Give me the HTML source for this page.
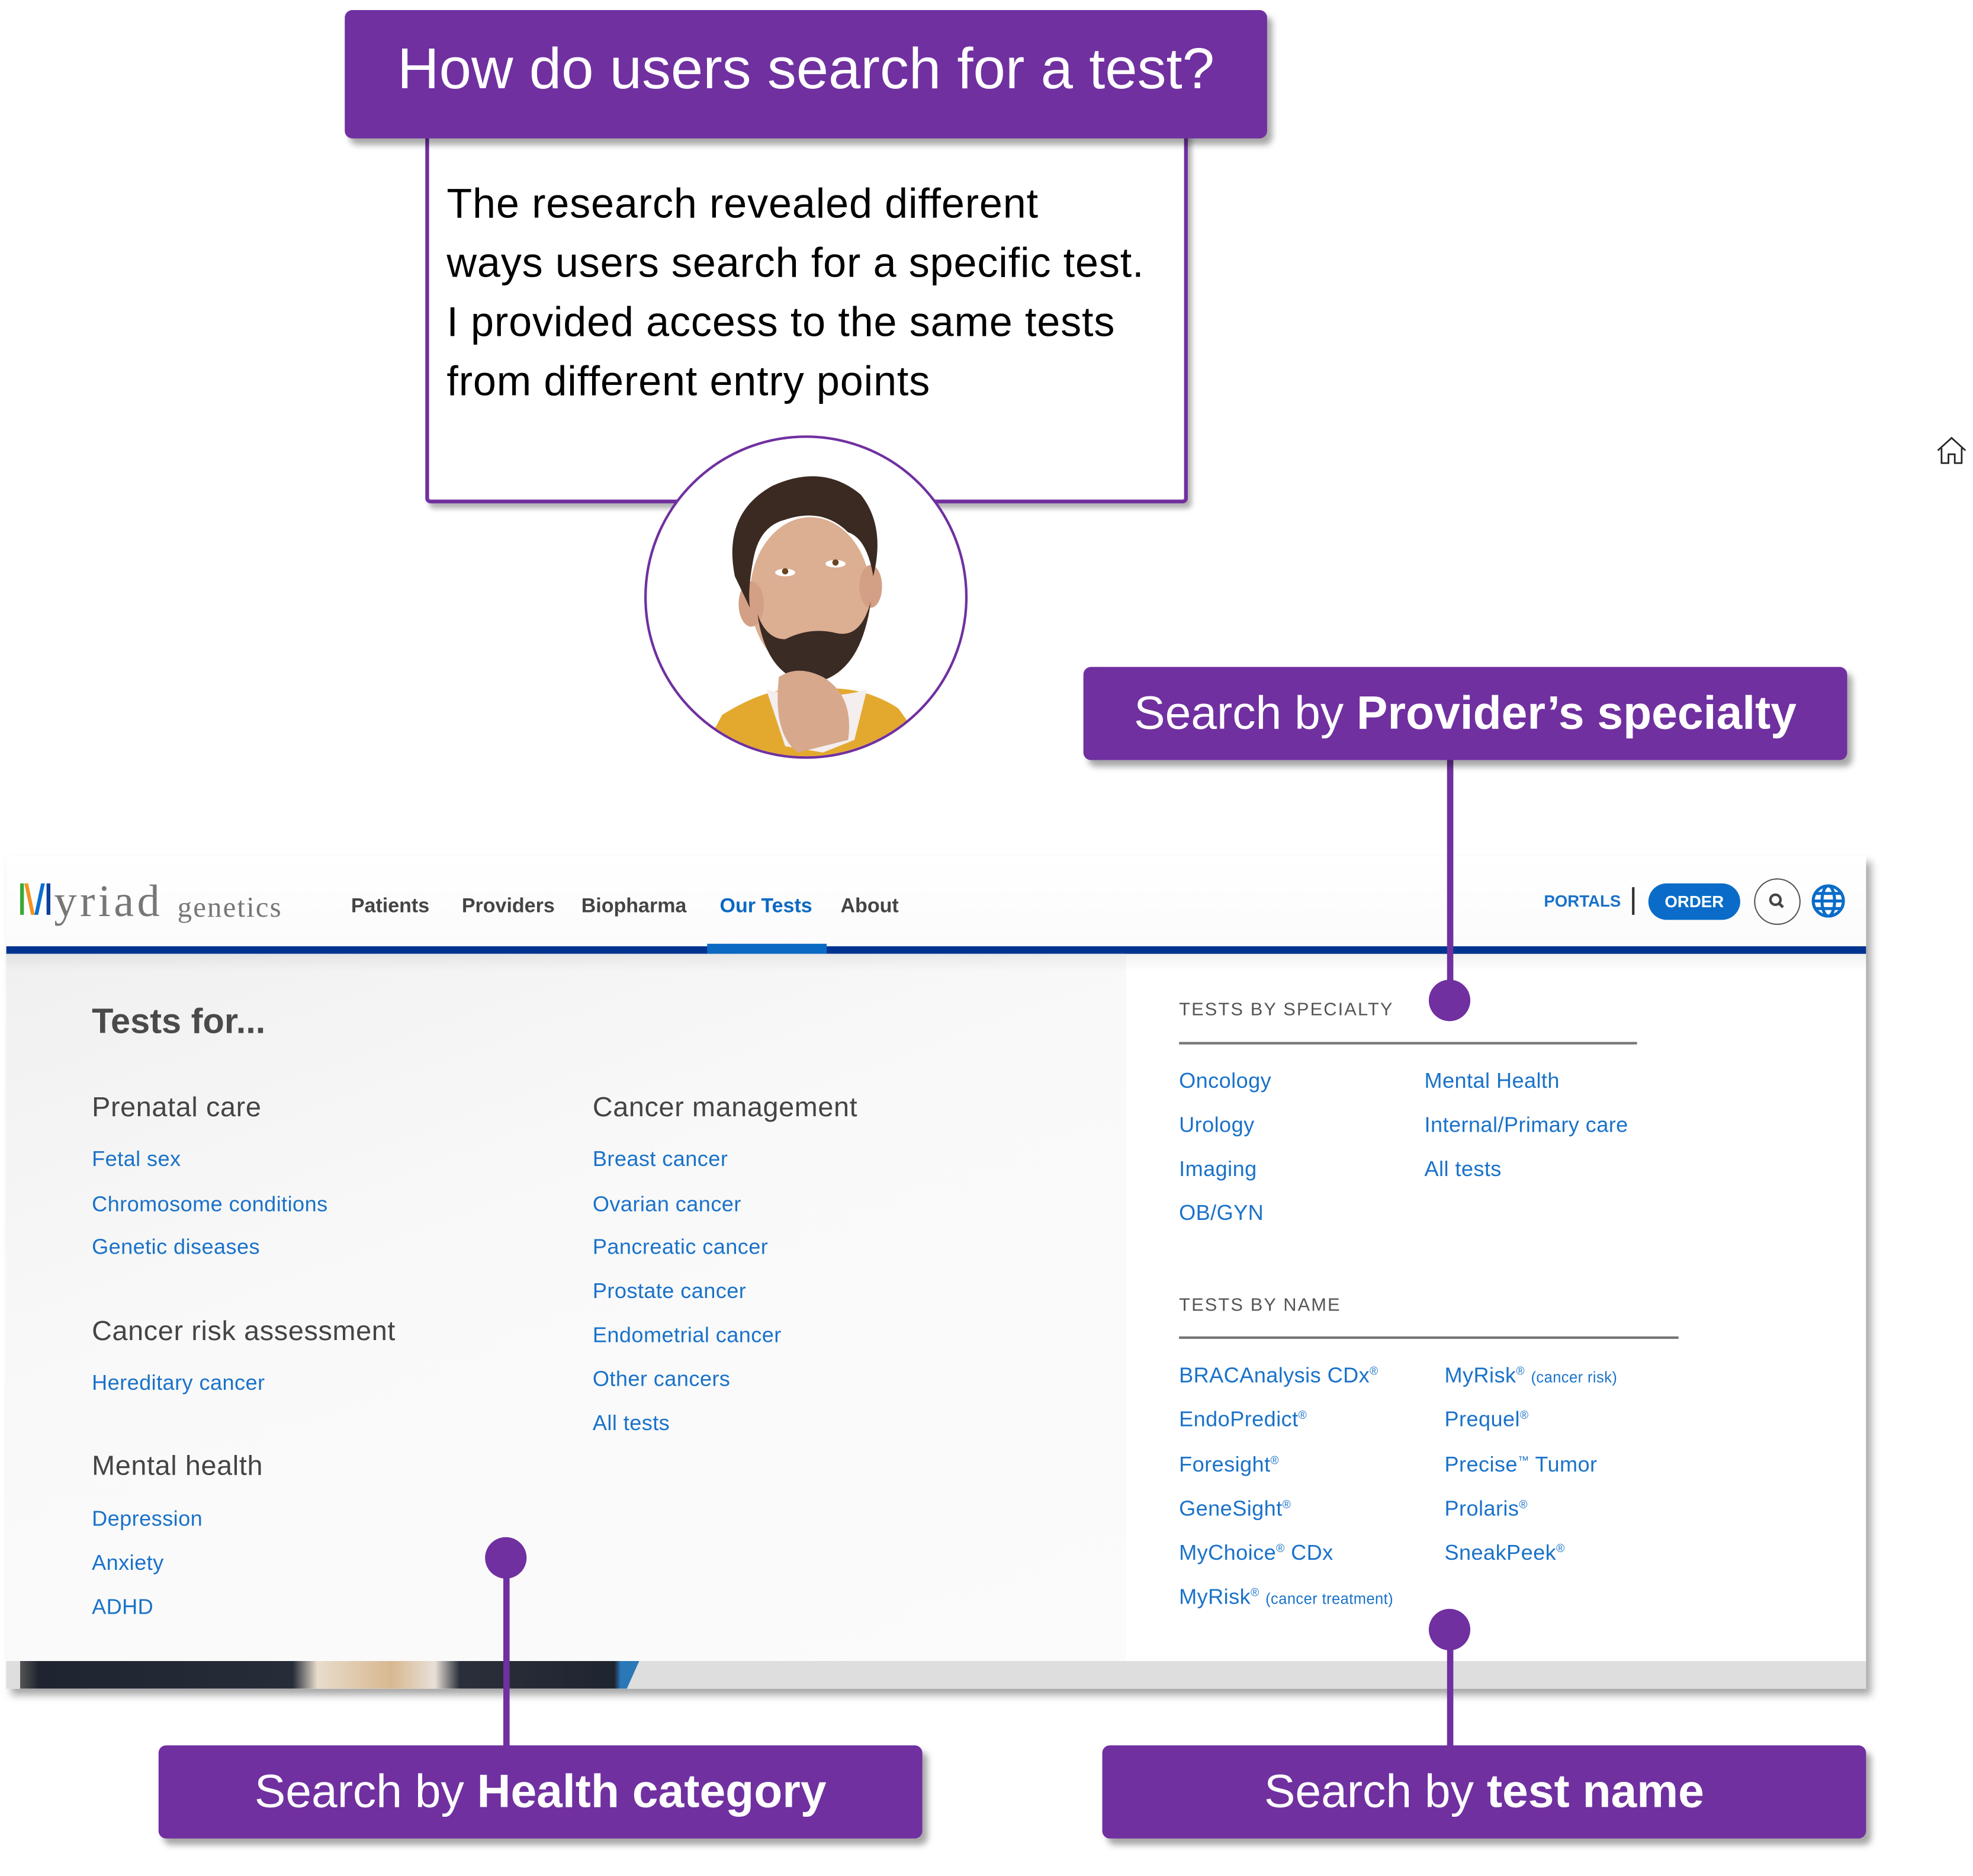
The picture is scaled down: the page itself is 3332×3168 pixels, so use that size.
<!DOCTYPE html>
<html><head><meta charset="utf-8">
<style>
*{margin:0;padding:0;box-sizing:border-box}
html,body{width:3332px;height:3167px;overflow:hidden;background:#fff}
#s{position:absolute;left:0;top:0;width:1568px;height:1491px;transform:scale(2.125);transform-origin:0 0;font-family:"Liberation Sans",sans-serif}
.a{position:absolute}
.t{position:absolute;white-space:nowrap;transform:translateY(-50%);line-height:1}
.lk{color:#1a72c9;font-size:17px;letter-spacing:0.2px}
.hd{color:#444;font-size:22px;letter-spacing:0.3px}
.cap{color:#555;font-size:14.5px;letter-spacing:1px}
.box{position:absolute;background:#7030a0;border-radius:6px;box-shadow:4px 5px 5px rgba(0,0,0,.35);color:#fff;text-align:center;white-space:nowrap}
.call{font-size:37px;line-height:74px;height:74px;width:607px}
.line{position:absolute;width:5px;background:#7030a0}
.dot{position:absolute;width:33px;height:33px;border-radius:50%;background:#7030a0;transform:translate(-50%,-50%)}
sup{font-size:9px;vertical-align:6px}
.sm{font-size:12px}
</style></head><body><div id="s">

<!-- body box -->
<div class="a" style="left:338px;top:100px;width:606px;height:300px;border:3px solid #7030a0;border-radius:4px;background:#fff;box-shadow:3px 4px 4px rgba(0,0,0,.3)"></div>
<div class="a" style="left:355px;top:138px;font-size:33px;line-height:47px;color:#000;letter-spacing:0.4px;white-space:nowrap">The research revealed different<br>ways users search for a specific test.<br>I provided access to the same tests<br>from different entry points</div>
<div class="box" style="left:274px;top:8px;width:733px;height:102px;font-size:46px;line-height:92px">How do users search for a test?</div>

<!-- face circle -->
<div class="a" style="left:512px;top:346px;width:257px;height:257px;border-radius:50%;border:2px solid #7030a0;background:#fff;overflow:hidden">
<svg width="257" height="257" viewBox="0 0 257 257">
<path d="M40 257 L60 220 Q100 195 130 200 Q170 195 200 215 L230 257Z" fill="#e3a92f"/>
<path d="M95 200 L110 245 L140 250 L165 240 L175 200 Q140 210 95 200Z" fill="#f4eeee"/>
<ellipse cx="130" cy="125" rx="48" ry="62" fill="#dcae92"/>
<ellipse cx="83" cy="132" rx="10" ry="18" fill="#d39f85"/>
<ellipse cx="178" cy="118" rx="9" ry="17" fill="#d39f85"/>
<path d="M70 110 Q60 60 100 38 Q140 20 170 45 Q190 70 180 110 Q175 80 160 75 Q140 55 110 65 Q90 70 85 95 Q80 120 82 135Z" fill="#3b2a22"/>
<path d="M88 140 Q95 190 130 195 Q170 190 178 130 Q170 160 150 155 Q130 150 110 160 Q95 160 88 140Z" fill="#3a2b24"/>
<path d="M105 190 Q120 180 140 190 Q165 205 160 240 L120 250 Q100 235 105 190Z" fill="#d7a88c"/>
<ellipse cx="110" cy="107" rx="8" ry="3" fill="#fff"/><circle cx="110" cy="106" r="2.5" fill="#6a4320"/>
<ellipse cx="150" cy="100" rx="8" ry="3" fill="#fff"/><circle cx="150" cy="99" r="2.5" fill="#6a4320"/>
</svg></div>

<!-- home icon -->
<svg class="a" style="left:1538px;top:345px" width="26" height="26" viewBox="0 0 26 26"><path d="M2 13 L13 3 L24 13 M5 11 V23 H10.5 V16 H15.5 V23 H21 V11" fill="none" stroke="#222" stroke-width="1.3"/></svg>

<!-- web panel -->
<div class="a" style="left:5px;top:680px;width:1478px;height:662px;background:#fff;box-shadow:4px 5px 6px rgba(0,0,0,.35)"></div>
<div class="a" style="left:5px;top:680px;width:1478px;height:72px;background:linear-gradient(#fff,#fbfbfb)"></div>
<div class="a" style="left:5px;top:752px;width:1478px;height:6px;background:#00338f"></div>
<div class="a" style="left:562px;top:750px;width:95px;height:8px;background:#0a69c2"></div>
<div class="a" style="left:5px;top:758px;width:890px;height:562px;background:linear-gradient(160deg,#f0f0f0 0%,#f9f9f9 40%,#fbfbfb 100%)"></div>
<div class="a" style="left:5px;top:758px;width:1478px;height:14px;background:linear-gradient(rgba(0,0,0,.06),rgba(0,0,0,0))"></div>
<div class="a" style="left:5px;top:1320px;width:1478px;height:22px;background:#dedede"></div>
<div class="a" style="left:16px;top:1320px;width:492px;height:22px;background:linear-gradient(90deg,#555 0,#1e2430 3%,#262c38 44%,#e8dccc 48%,#d8b890 60%,#e8e0d8 67%,#2a2f3a 71%,#1f2530 96%,#2a78b8 97%);clip-path:polygon(0 0,100% 0,98% 100%,0 100%)"></div>

<!-- logo -->
<div class="a" style="left:16px;top:702px;width:3px;height:25px;background:#3aa935"></div>
<div class="a" style="left:22px;top:702px;width:3px;height:25px;background:#f29222;transform:skewX(12deg)"></div>
<div class="a" style="left:30px;top:702px;width:3px;height:25px;background:#0b6fd0;transform:skewX(-12deg)"></div>
<div class="a" style="left:37px;top:702px;width:3px;height:25px;background:#0b3f9a"></div>
<div class="t" style="left:43px;top:716px;font-family:'Liberation Serif',serif;font-size:36px;color:#777;letter-spacing:2.5px">yriad</div>
<div class="t" style="left:141px;top:721px;font-family:'Liberation Serif',serif;font-size:23px;color:#777;letter-spacing:1px">genetics</div>

<div class="t" style="left:279px;top:721px;font-size:16px;font-weight:bold;color:#444">Patients</div>
<div class="t" style="left:367px;top:721px;font-size:16px;font-weight:bold;color:#444">Providers</div>
<div class="t" style="left:462px;top:721px;font-size:16px;font-weight:bold;color:#444">Biopharma</div>
<div class="t" style="left:572px;top:721px;font-size:16px;font-weight:bold;color:#0a69c2">Our Tests</div>
<div class="t" style="left:668px;top:721px;font-size:16px;font-weight:bold;color:#444">About</div>

<div class="t" style="left:1227px;top:716px;font-size:13px;font-weight:bold;color:#1a72c9">PORTALS</div>
<div class="a" style="left:1297px;top:705px;width:1.5px;height:22px;background:#333"></div>
<div class="a" style="left:1310px;top:702px;width:73px;height:29px;border-radius:15px;background:#0a6cc8;color:#fff;font-size:13px;font-weight:bold;text-align:center;line-height:29px">ORDER</div>
<div class="a" style="left:1394px;top:698px;width:37px;height:37px;border-radius:50%;border:1.3px solid #555"></div>
<svg class="a" style="left:1404px;top:708px" width="16" height="16" viewBox="0 0 16 16"><circle cx="7" cy="7" r="4" fill="none" stroke="#444" stroke-width="2"/><path d="M10 10 L13 13" stroke="#444" stroke-width="2.2"/></svg>
<svg class="a" style="left:1439px;top:702px" width="28" height="28" viewBox="0 0 28 28" fill="none" stroke="#0a6cc8" stroke-width="2.4"><circle cx="14" cy="14" r="12"/><ellipse cx="14" cy="14" rx="5" ry="12"/><path d="M2 14H26M4 8H24M4 20H24"/></svg>

<!-- left content -->
<div class="t" style="left:73px;top:812px;font-size:28px;font-weight:bold;color:#4a4a4a">Tests for...</div>
<div class="t hd" style="left:73px;top:880px">Prenatal care</div>
<div class="t lk" style="left:73px;top:921px">Fetal sex</div>
<div class="t lk" style="left:73px;top:957px">Chromosome conditions</div>
<div class="t lk" style="left:73px;top:991px">Genetic diseases</div>
<div class="t hd" style="left:73px;top:1058px">Cancer risk assessment</div>
<div class="t lk" style="left:73px;top:1099px">Hereditary cancer</div>
<div class="t hd" style="left:73px;top:1165px">Mental health</div>
<div class="t lk" style="left:73px;top:1207px">Depression</div>
<div class="t lk" style="left:73px;top:1242px">Anxiety</div>
<div class="t lk" style="left:73px;top:1277px">ADHD</div>

<div class="t hd" style="left:471px;top:880px">Cancer management</div>
<div class="t lk" style="left:471px;top:921px">Breast cancer</div>
<div class="t lk" style="left:471px;top:957px">Ovarian cancer</div>
<div class="t lk" style="left:471px;top:991px">Pancreatic cancer</div>
<div class="t lk" style="left:471px;top:1026px">Prostate cancer</div>
<div class="t lk" style="left:471px;top:1061px">Endometrial cancer</div>
<div class="t lk" style="left:471px;top:1096px">Other cancers</div>
<div class="t lk" style="left:471px;top:1131px">All tests</div>

<!-- right content -->
<div class="t cap" style="left:937px;top:803px">TESTS BY SPECIALTY</div>
<div class="a" style="left:937px;top:828px;width:364px;height:1.5px;background:#777"></div>
<div class="t lk" style="left:937px;top:859px">Oncology</div>
<div class="t lk" style="left:937px;top:894px">Urology</div>
<div class="t lk" style="left:937px;top:929px">Imaging</div>
<div class="t lk" style="left:937px;top:964px">OB/GYN</div>
<div class="t lk" style="left:1132px;top:859px">Mental Health</div>
<div class="t lk" style="left:1132px;top:894px">Internal/Primary care</div>
<div class="t lk" style="left:1132px;top:929px">All tests</div>

<div class="t cap" style="left:937px;top:1038px">TESTS BY NAME</div>
<div class="a" style="left:937px;top:1062px;width:397px;height:1.5px;background:#777"></div>
<div class="t lk" style="left:937px;top:1093px">BRACAnalysis CDx<sup>®</sup></div>
<div class="t lk" style="left:937px;top:1128px">EndoPredict<sup>®</sup></div>
<div class="t lk" style="left:937px;top:1164px">Foresight<sup>®</sup></div>
<div class="t lk" style="left:937px;top:1199px">GeneSight<sup>®</sup></div>
<div class="t lk" style="left:937px;top:1234px">MyChoice<sup>®</sup> CDx</div>
<div class="t lk" style="left:937px;top:1269px">MyRisk<sup>®</sup> <span class="sm">(cancer treatment)</span></div>
<div class="t lk" style="left:1148px;top:1093px">MyRisk<sup>®</sup> <span class="sm">(cancer risk)</span></div>
<div class="t lk" style="left:1148px;top:1128px">Prequel<sup>®</sup></div>
<div class="t lk" style="left:1148px;top:1164px">Precise<sup>™</sup> Tumor</div>
<div class="t lk" style="left:1148px;top:1199px">Prolaris<sup>®</sup></div>
<div class="t lk" style="left:1148px;top:1234px">SneakPeek<sup>®</sup></div>

<!-- provider callout -->
<div class="line" style="left:1150px;top:600px;height:195px"></div>
<div class="dot" style="left:1152px;top:795px"></div>
<div class="box call" style="left:861px;top:530px">Search by <b>Provider’s specialty</b></div>

<!-- bottom callouts -->
<div class="line" style="left:400px;top:1238px;height:152px"></div>
<div class="dot" style="left:402px;top:1238px"></div>
<div class="box call" style="left:126px;top:1387px">Search by <b>Health category</b></div>

<div class="line" style="left:1150px;top:1295px;height:95px"></div>
<div class="dot" style="left:1152px;top:1295px"></div>
<div class="box call" style="left:876px;top:1387px">Search by <b>test name</b></div>

</div></body></html>
